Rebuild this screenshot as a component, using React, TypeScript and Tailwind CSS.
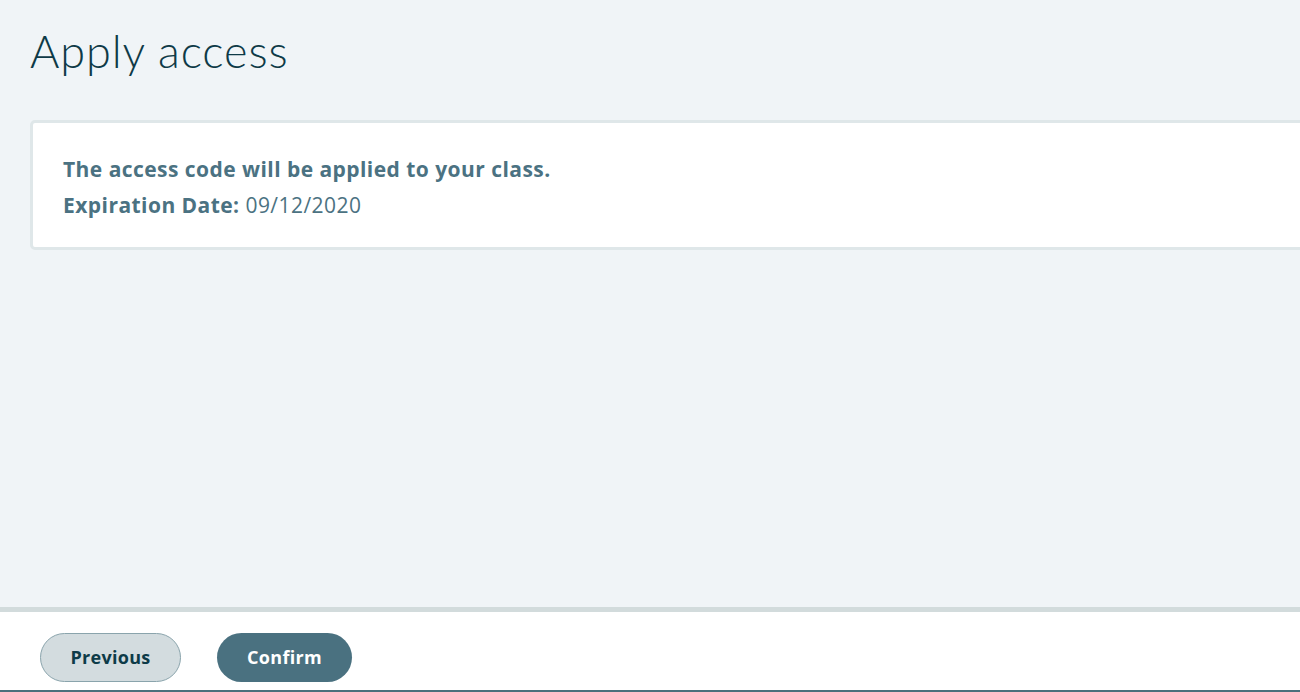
export default function App() {
  return (
    <div className="h-[692px] w-[1300px] overflow-hidden flex flex-col bg-[#f0f4f7]" style={{ fontFamily: '"Open Sans", Lato, sans-serif' }}>
      <main className="flex-1 pl-[30px]">
        <h1 className="pt-[23px] text-[45px] leading-[56px] font-light text-[#0e3a47] tracking-[0.9px]" style={{ fontFamily: 'Lato, sans-serif' }}>
          Apply access
        </h1>
        <div className="mt-[41px] w-[1300px] h-[130px] bg-white border-[3px] border-[#dfe7e9] rounded-[5px] pl-[30px] pt-[28px]">
          <p className="text-[21px] leading-[36px] font-bold text-[#4b7282] tracking-[0.45px]">
            The access code will be applied to your class.
          </p>
          <p className="text-[21px] leading-[36px] text-[#4b7282] tracking-[0.45px]">
            <span className="font-bold">Expiration Date:</span> 09/12/2020
          </p>
        </div>
      </main>
      <footer className="h-[85px] bg-white border-t-[5px] border-t-[#d2dbdc] border-b-2 border-b-[#4a6f7c] flex items-start gap-[36px] pl-[40px] pt-[21px]">
        <button className="h-[49px] w-[141px] rounded-full bg-[#d3dcdf] border border-[#8aa4ac] text-[18px] font-bold text-[#0d3b48] tracking-[0.3px]">
          Previous
        </button>
        <button className="h-[49px] w-[135px] rounded-full bg-[#4a7180] text-[18px] font-bold text-white tracking-[0.3px]">
          Confirm
        </button>
      </footer>
    </div>
  );
}
